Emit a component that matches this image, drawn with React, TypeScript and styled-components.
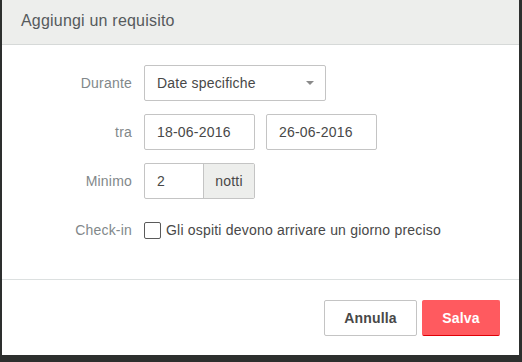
import React from 'react'
import styled, { createGlobalStyle } from 'styled-components'

const GlobalStyle = createGlobalStyle`
  html, body {
    margin: 0;
    padding: 0;
    background: #2d2f2e;
    font-family: "Liberation Sans", Arial, sans-serif;
    letter-spacing: 0.2px;
  }
  * { box-sizing: border-box; }
`

function App() {
  return (
    <>
      <GlobalStyle />
      <Page>
        <Modal>
          <Header>
            <Title>Aggiungi un requisito</Title>
          </Header>
          <Body>
            <Label>Durante</Label>
            <Select>
              <span>Date specifiche</span>
              <Caret />
            </Select>

            <Label>tra</Label>
            <DateRow>
              <Input>18-06-2016</Input>
              <Input>26-06-2016</Input>
            </DateRow>

            <Label>Minimo</Label>
            <InputGroup>
              <GroupValue>2</GroupValue>
              <Addon>notti</Addon>
            </InputGroup>

            <Label>Check-in</Label>
            <CheckRow>
              <CheckBox />
              <CheckText>Gli ospiti devono arrivare un giorno preciso</CheckText>
            </CheckRow>
          </Body>
          <Footer>
            <Button>Annulla</Button>
            <Button primary>Salva</Button>
          </Footer>
        </Modal>
      </Page>
    </>
  )
}

export default App

//Styled Components

const Page = styled.div`
  width: 522px;
  height: 362px;
  padding-left: 2px;
`

const Modal = styled.div`
  width: 517px;
  height: 355px;
  background: #fff;
  display: flex;
  flex-direction: column;
`

const Header = styled.div`
  height: 45px;
  background: #edeeec;
  border-bottom: 1px solid #d6d9d8;
  display: flex;
  align-items: center;
  padding: 0 0 2px 19px;
`

const Title = styled.span`
  color: #565a5c;
  font-size: 16px;
`

const Body = styled.div`
  display: grid;
  grid-template-columns: 130px auto;
  column-gap: 12px;
  grid-auto-rows: 36px;
  row-gap: 13px;
  align-items: center;
  padding-top: 20px;
  height: 235px;
  border-bottom: 1px solid #dce0e0;
`

const Label = styled.span`
  text-align: right;
  color: #82888a;
  font-size: 14px;
`

const Select = styled.div`
  width: 182px;
  height: 36px;
  border: 1px solid #c4c4c4;
  border-radius: 2px;
  display: flex;
  align-items: center;
  justify-content: space-between;
  padding: 0 10px 0 12px;
  color: #484848;
  font-size: 14px;
`

const Caret = styled.span`
  width: 0;
  height: 0;
  border-left: 4px solid transparent;
  border-right: 4px solid transparent;
  border-top: 4px solid #8a8a8a;
  margin-right: 1px;
`

const DateRow = styled.div`
  display: flex;
  gap: 11px;
`

const Input = styled.div`
  width: 111px;
  height: 36px;
  border: 1px solid #c4c4c4;
  border-radius: 2px;
  display: flex;
  align-items: center;
  padding-left: 12px;
  color: #484848;
  font-size: 14px;
`

const InputGroup = styled.div`
  width: 111px;
  height: 36px;
  border: 1px solid #c4c4c4;
  border-radius: 2px;
  display: flex;
  font-size: 14px;
  color: #484848;
`

const GroupValue = styled.div`
  flex: 1;
  display: flex;
  align-items: center;
  padding-left: 12px;
`

const Addon = styled.div`
  width: 51px;
  background: #edeeec;
  border-left: 1px solid #c4c4c4;
  display: flex;
  align-items: center;
  justify-content: center;
`

const CheckRow = styled.div`
  display: flex;
  align-items: center;
  gap: 5px;
`

const CheckBox = styled.span`
  width: 17px;
  height: 17px;
  border: 1px solid #5a5a5a;
  border-radius: 2px;
  background: #fff;
`

const CheckText = styled.span`
  color: #484848;
  font-size: 14px;
`

const Footer = styled.div`
  flex: 1;
  display: flex;
  justify-content: flex-end;
  align-items: center;
  gap: 5px;
  padding-right: 19px;
`

const Button = styled.button<{ primary?: boolean }>`
  height: 36px;
  padding: 0;
  width: ${(props) => (props.primary ? '78px' : '93px')};
  border-radius: 2px;
  font-family: "Liberation Sans", Arial, sans-serif;
  font-size: 14px;
  font-weight: 700;
  letter-spacing: 0.2px;
  border: 1px solid ${(props) => (props.primary ? '#ff5a5f' : '#c4c4c4')};
  border-bottom-color: ${(props) => (props.primary ? '#e00007' : '#c4c4c4')};
  background: ${(props) => (props.primary ? '#ff5a5f' : '#fff')};
  color: ${(props) => (props.primary ? '#fff' : '#484848')};
`
